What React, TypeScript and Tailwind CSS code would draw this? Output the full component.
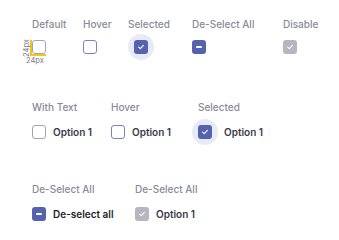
import React from "react";

type Kind = "default" | "hover" | "selected" | "minus" | "disabled";

function Box({ kind }: { kind: Kind }) {
  const base = "relative flex h-[14px] w-[14px] items-center justify-center rounded-[3px]";
  let cls = "";
  if (kind === "default") cls = "border-[1.5px] border-[#a4a4b0] bg-white";
  if (kind === "hover") cls = "border-[1.5px] border-[#7683c8] bg-white";
  if (kind === "selected") cls = "bg-[#5562ae]";
  if (kind === "minus") cls = "bg-[#5562ae]";
  if (kind === "disabled") cls = "bg-[#b5b6c0]";
  return (
    <div className="relative h-[14px] w-[14px]">
      {kind === "selected" && (
        <div className="absolute -inset-[6px] rounded-full bg-[#e8ebf6]" />
      )}
      <div className={`${base} ${cls}`}>
        {(kind === "selected" || kind === "disabled") && (
          <svg width="8" height="8" viewBox="0 0 8 8" fill="none">
            <path d="M1.6 4.2 L3.3 5.7 L6.4 2.4" stroke="white" strokeWidth="1.1" strokeLinecap="round" strokeLinejoin="round" />
          </svg>
        )}
        {kind === "minus" && <div className="h-[1.5px] w-[6px] rounded bg-white" />}
      </div>
    </div>
  );
}

function Label({ children }: { children: React.ReactNode }) {
  return <div className="text-[10px] font-medium leading-[14px] text-[#8a8a98]">{children}</div>;
}

function Option({ kind, text, dark }: { kind: Kind; text: string; dark?: boolean }) {
  return (
    <div className="flex items-center gap-[7px]">
      <Box kind={kind} />
      <span className={`text-[10px] font-semibold leading-[14px] ${dark ? "text-[#1e1e2a]" : "text-[#3a3a48]"}`}>{text}</span>
    </div>
  );
}

export default function App() {
  return (
    <div
      className="h-[240px] w-[339px] bg-white pl-[32px] pt-[17px]"
      style={{ fontFamily: "Inter, 'Noto Sans', sans-serif" }}
    >
      {/* Row 1 */}
      <div className="flex">
        <div className="flex w-[51px] flex-col items-start gap-[9px]">
          <Label>Default</Label>
          <div className="relative">
            <Box kind="default" />
            <div className="absolute left-[-2px] top-0 h-[15px] w-[2px] bg-[#f5c518]" />
            <div className="absolute left-[-2px] top-[14px] h-[2px] w-[16px] bg-[#f5c518]" />
            <div className="absolute left-[-14px] top-[4px] origin-center -rotate-90 text-[7.5px] leading-[8px] text-[#7a7a86]">24px</div>
            <div className="absolute left-[-6px] top-[17px] text-[7.5px] leading-[8px] text-[#7a7a86]">24px</div>
          </div>
        </div>
        <div className="flex w-[45px] flex-col items-start gap-[9px]">
          <Label>Hover</Label>
          <Box kind="hover" />
        </div>
        <div className="flex w-[64px] flex-col items-start gap-[9px]">
          <Label>Selected</Label>
          <div className="ml-[6px]">
            <Box kind="selected" />
          </div>
        </div>
        <div className="flex w-[91px] flex-col items-start gap-[9px]">
          <Label>De-Select All</Label>
          <Box kind="minus" />
        </div>
        <div className="flex flex-col items-start gap-[9px]">
          <Label>Disable</Label>
          <Box kind="disabled" />
        </div>
      </div>

      {/* Row 2 */}
      <div className="mt-[46px] flex">
        <div className="flex w-[79px] flex-col items-start gap-[11px]">
          <Label>With Text</Label>
          <Option kind="default" text="Option 1" />
        </div>
        <div className="flex w-[87px] flex-col items-start gap-[11px]">
          <Label>Hover</Label>
          <Option kind="hover" text="Option 1" />
        </div>
        <div className="flex flex-col items-start gap-[11px]">
          <Label>Selected</Label>
          <div className="flex items-center gap-[12px]">
            <Box kind="selected" />
            <span className="text-[10px] font-semibold leading-[14px] text-[#3a3a48]">Option 1</span>
          </div>
        </div>
      </div>

      {/* Row 3 */}
      <div className="mt-[43px] flex">
        <div className="flex w-[103px] flex-col items-start gap-[11px]">
          <Label>De-Select All</Label>
          <Option kind="minus" text="De-select all" dark />
        </div>
        <div className="flex flex-col items-start gap-[11px]">
          <Label>De-Select All</Label>
          <Option kind="disabled" text="Option 1" />
        </div>
      </div>
    </div>
  );
}
